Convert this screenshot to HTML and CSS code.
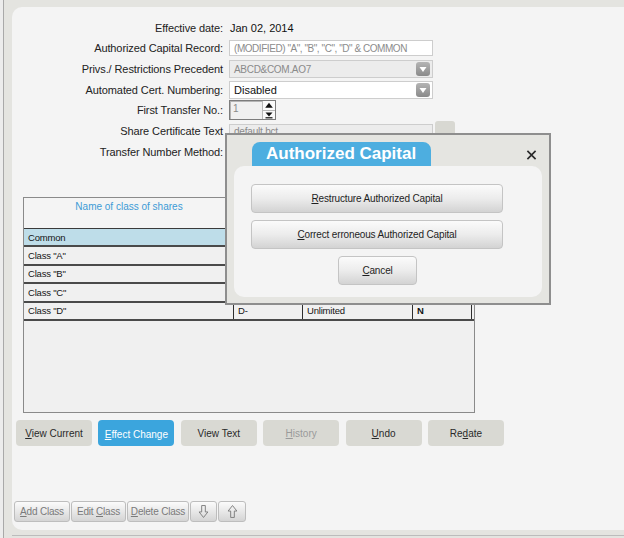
FILE: index.html
```html
<!DOCTYPE html>
<html>
<head>
<meta charset="utf-8">
<title>Authorized Capital</title>
<link rel="stylesheet" href="styles.css">
</head>
<body>
<div class="app">
  <div class="rail"></div>
  <main class="panel">
    <div class="form">
      <div class="lbl">Effective date:</div>
      <div class="val"><span class="plain">Jan 02, 2014</span></div>

      <div class="lbl">Authorized Capital Record:</div>
      <div class="val"><div class="field rec">(MODIFIED) "A", "B", "C", "D" &amp; COMMON</div></div>

      <div class="lbl">Privs./ Restrictions Precedent</div>
      <div class="val">
        <div class="field sel dis"><span class="seltext">ABCD&amp;COM.AO7</span>
          <svg class="drop" viewBox="0 0 14 14"><defs><linearGradient id="dg" x1="0" y1="0" x2="0" y2="1"><stop offset="0" stop-color="#b4b4b4"/><stop offset="1" stop-color="#8a8a8a"/></linearGradient></defs><rect x="0" y="0" width="14" height="14" rx="3" fill="url(#dg)"/><path d="M3.5 5 L10.5 5 L7 10 Z" fill="#fff"/></svg>
        </div>
      </div>

      <div class="lbl">Automated Cert. Numbering:</div>
      <div class="val">
        <div class="field sel"><span class="seltext dark">Disabled</span>
          <svg class="drop" viewBox="0 0 14 14"><rect x="0" y="0" width="14" height="14" rx="3" fill="url(#dg)"/><path d="M3.5 5 L10.5 5 L7 10 Z" fill="#fff"/></svg>
        </div>
      </div>

      <div class="lbl">First Transfer No.:</div>
      <div class="val">
        <div class="spin"><span class="spinval">1</span>
          <div class="spinbtns">
            <svg class="spinbtn" viewBox="0 0 11 8"><path d="M5.5 1.5 L9 6 L2 6 Z" fill="#111"/></svg>
            <svg class="spinbtn down" viewBox="0 0 11 8"><path d="M2 1.5 L9 1.5 L5.5 5.5 Z" fill="#111"/><rect x="2" y="6.2" width="7" height="1.2" fill="#111"/></svg>
          </div>
        </div>
      </div>

      <div class="lbl">Share Certificate Text</div>
      <div class="val"><div class="field dis cert">default.bct</div><div class="browse"></div></div>

      <div class="lbl">Transfer Number Method:</div>
      <div class="val"></div>
    </div>

    <div class="grid">
      <div class="ghead"><div class="gcap">Name of class of shares</div></div>
      <div class="grow sel"><div class="cell c1">Common</div><div class="cell c2"></div><div class="cell c3"></div><div class="cell c4"></div></div>
      <div class="grow"><div class="cell c1">Class "A"</div><div class="cell c2"></div><div class="cell c3"></div><div class="cell c4"></div></div>
      <div class="grow"><div class="cell c1">Class "B"</div><div class="cell c2"></div><div class="cell c3"></div><div class="cell c4"></div></div>
      <div class="grow"><div class="cell c1">Class "C"</div><div class="cell c2"></div><div class="cell c3"></div><div class="cell c4"></div></div>
      <div class="grow"><div class="cell c1">Class "D"</div><div class="cell c2">D-</div><div class="cell c3">Unlimited</div><div class="cell c4 bold">N</div></div>
      <div class="gfill"></div>
    </div>

    <div class="actions">
      <div class="abtn"><span><u>V</u>iew Current</span></div>
      <div class="abtn primary"><span><u>E</u>ffect Change</span></div>
      <div class="abtn"><span>View Text</span></div>
      <div class="abtn off"><span><u>H</u>istory</span></div>
      <div class="abtn"><span><u>U</u>ndo</span></div>
      <div class="abtn"><span>Re<u>d</u>ate</span></div>
    </div>

    <div class="tools">
      <div class="tbtn w-add"><span><u>A</u>dd Class</span></div>
      <div class="tbtn w-edit"><span>Edit <u>C</u>lass</span></div>
      <div class="tbtn w-del"><span><u>D</u>elete Class</span></div>
      <div class="tbtn w-dn"><svg class="arr" viewBox="0 0 12 16"><path d="M4 1.5 H8 V8.5 H10.8 L6 14.5 L1.2 8.5 H4 Z" fill="none" stroke="#7a7a7a" stroke-width="1"/></svg></div>
      <div class="tbtn w-up"><svg class="arr" viewBox="0 0 12 16"><path d="M4 14.5 H8 V7.5 H10.8 L6 1.5 L1.2 7.5 H4 Z" fill="none" stroke="#7a7a7a" stroke-width="1"/></svg></div>
    </div>
  </main>
</div>

<div class="dialog">
  <div class="dhead">
    <div class="dtab">Authorized Capital</div>
    <svg class="dclose" viewBox="0 0 11 11"><path d="M1 1 L10 10 M10 1 L1 10" stroke="#2a2a2a" stroke-width="1.8" fill="none"/></svg>
  </div>
  <div class="dbody">
    <div class="dbtn"><span><u>R</u>estructure Authorized Capital</span></div>
    <div class="dbtn"><span><u>C</u>orrect erroneous Authorized Capital</span></div>
    <div class="dbtn cancel"><span><u>C</u>ancel</span></div>
  </div>
</div>
</body>
</html>
```

FILE: styles.css
```css
* { box-sizing: border-box; }
html, body { margin: 0; padding: 0; }
body {
  width: 624px;
  height: 538px;
  overflow: hidden;
  position: relative;
  background: #e4e4e0;
  font-family: "Liberation Sans", Arial, sans-serif;
  color: #1e1e1e;
}
u { text-decoration: underline; text-underline-offset: 1px; }

.app {
  display: flex;
  height: 538px;
  background: linear-gradient(to top, #e4e4e0 0 2px, #bcbcbc 2px 3px, #e4e4e0 3px);
}
.rail {
  width: 12px;
  flex: none;
  background: linear-gradient(to right, #ececec 0 3px, #a9a9a9 3px 4px, #e4e4e0 4px);
}
.panel {
  flex: 1;
  margin-top: 7px;
  height: 523px;
  background: #f4f4f4;
  border-radius: 10px 0 0 10px;
  display: flex;
  flex-direction: column;
}

/* form */
.form {
  display: grid;
  grid-template-columns: 211px 1fr;
  grid-template-rows: 20px 20px 22px 20px 20px 22px 20px;
  column-gap: 6px;
  margin-top: 11px;
  align-items: center;
}
.lbl {
  text-align: right;
  font-size: 11px;
  letter-spacing: -0.1px;
  white-space: nowrap;
  color: #222;
}
.val { display: flex; align-items: center; height: 100%; }
.plain { font-size: 11px; padding-left: 1px; color: #111; }
.field {
  width: 204px;
  border: 1px solid #cdcdcd;
  background: #fff;
  display: flex;
  align-items: center;
  padding-left: 4px;
  font-size: 11px;
  white-space: nowrap;
  overflow: hidden;
}
.field.rec {
  height: 16px;
  font-size: 10px;
  letter-spacing: -0.45px;
  color: #8c8c8c;
}
.field.sel { height: 18px; padding-right: 2px; }
.field.dis { background: #ececec; }
.seltext { font-size: 10px; letter-spacing: -0.3px; color: #8a8a8a; }
.seltext.dark { font-size: 11px; letter-spacing: 0; color: #111; }
.drop { width: 14px; height: 14px; margin-left: auto; }

.spin {
  width: 47px;
  height: 20px;
  border: 1px solid #7c7c7c;
  box-shadow: inset 1px 1px 0 #b4b4b4;
  background: #f0f0f0;
  display: flex;
}
.spinval { font-size: 10px; color: #8a8a8a; padding: 2px 0 0 3px; flex: 1; }
.spinbtns {
  width: 13px;
  display: flex;
  flex-direction: column;
  border-left: 1px solid #b8b8b8;
  background: #fafafa;
}
.spinbtn { width: 12px; height: 9px; display: block; }
.spinbtn.down { border-top: 1px solid #b8b8b8; }

.field.cert { height: 15px; font-size: 10px; color: #8a8a8a; letter-spacing: -0.2px; }
.browse {
  width: 20px;
  height: 20px;
  margin-left: 2px;
  background: #d8d8d2;
  border-radius: 3px;
}

/* grid */
.grid {
  margin: 35px 0 0 11px;
  width: 452px;
  height: 216px;
  border: 1px solid #8a8a8a;
  background: #f0f0f0;
  display: flex;
  flex-direction: column;
}
.ghead {
  height: 31px;
  flex: none;
  background: #f4f4f4;
  border-bottom: 1px solid #3a3a3a;
}
.gcap {
  width: 210px;
  text-align: center;
  font-size: 10px;
  color: #3c9bd6;
  padding-top: 3px;
}
.grow {
  height: 18.4px;
  flex: none;
  display: flex;
  border-bottom: 2px solid #4a4a4a;
  background: #f0f0f0;
  font-size: 9.5px;
  letter-spacing: -0.2px;
  color: #141414;
}
.grow.sel { background: #bedde9; }
.cell {
  display: flex;
  align-items: center;
  padding-left: 4px;
  border-right: 1px solid #2e2e2e;
  white-space: nowrap;
}
.c1 { width: 210px; }
.c2 { width: 69px; }
.c3 { width: 110px; }
.c4 { width: 59px; }
.bold { font-weight: bold; }
.gfill { flex: 1; }

/* action buttons */
.actions {
  display: flex;
  gap: 6.4px;
  margin: 7px 0 0 4px;
}
.abtn {
  width: 76px;
  height: 26px;
  background: #d9d9d3;
  border-radius: 4px;
  display: flex;
  align-items: center;
  justify-content: center;
  font-size: 10px;
  color: #2a2a2a;
}
.abtn.primary { background: #3ba5dd; color: #fff; padding-top: 2px; }
.abtn.off { color: #9a9a9a; }

/* bottom tools */
.tools {
  display: flex;
  gap: 1px;
  margin: 55px 0 0 2px;
}
.tbtn {
  height: 21px;
  border: 1px solid #bdbdbd;
  border-radius: 3px;
  background: linear-gradient(#fbfbfb, #e6e6e6 55%, #d4d4d4);
  display: flex;
  align-items: center;
  justify-content: center;
  font-size: 10px;
  letter-spacing: -0.2px;
  color: #7a7a7a;
  white-space: nowrap;
}
.w-add { width: 56px; }
.w-edit { width: 55px; }
.w-del { width: 62px; }
.w-dn { width: 27px; }
.w-up { width: 28px; }
.arr { width: 11px; height: 15px; }

/* dialog */
.dialog {
  position: absolute;
  left: 225px;
  top: 133px;
  width: 326px;
  height: 172px;
  border: 2px solid #8e8e8e;
  background: #e5e5e1;
  padding: 0 7px 6px;
  display: flex;
  flex-direction: column;
}
.dhead {
  height: 31px;
  flex: none;
  display: flex;
  align-items: flex-end;
  justify-content: space-between;
}
.dtab {
  margin-left: 18px;
  width: 179px;
  height: 24px;
  border-radius: 8px 8px 0 0;
  background: #4daee0;
  color: #fff;
  font-weight: bold;
  font-size: 17px;
  line-height: 24px;
  padding-left: 14px;
  white-space: nowrap;
}
.dclose {
  width: 11px;
  height: 10px;
  align-self: flex-start;
  margin: 15px 5px 0 0;
}
.dbody {
  flex: 1;
  background: #f4f4f4;
  border-radius: 10px;
  padding: 18px 0 0 17px;
  display: flex;
  flex-direction: column;
  gap: 7px;
}
.dbtn {
  width: 252px;
  height: 29px;
  border: 1px solid #c4c4c4;
  border-radius: 4px;
  background: linear-gradient(#fbfbfb, #ececec 50%, #d3d3d3);
  display: flex;
  align-items: center;
  justify-content: center;
  font-size: 10px;
  letter-spacing: -0.15px;
  color: #1e1e1e;
}
.dbtn.cancel { width: 79px; margin-left: 87px; }
```
